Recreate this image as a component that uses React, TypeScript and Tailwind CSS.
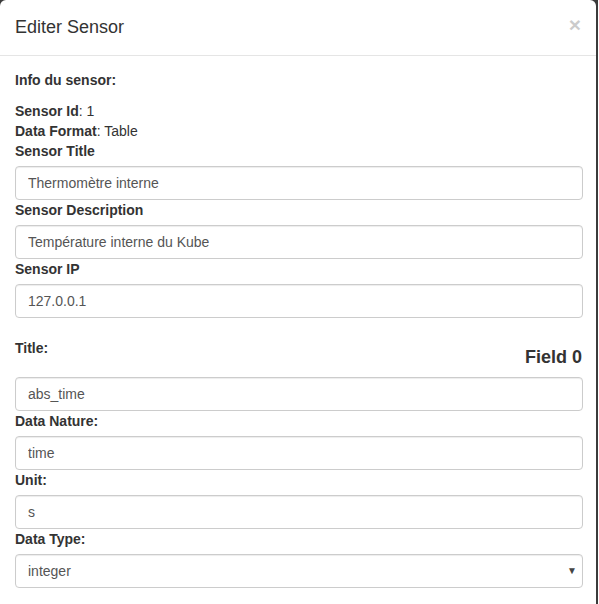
import React from "react";

const inputClass =
  "block h-[34px] w-full rounded-[4px] border border-[#ccc] bg-white px-3 py-[6px] text-[14px] leading-[20px] text-[#555] shadow-[inset_0_1px_1px_rgba(0,0,0,0.075)] outline-none";

const Field: React.FC<{ label: string; value: string }> = ({ label, value }) => (
  <div>
    <label className="mb-[5px] block font-bold leading-[20px]">{label}</label>
    <input className={inputClass} defaultValue={value} />
  </div>
);

const App: React.FC = () => {
  return (
    <div className="min-h-screen w-[599px] bg-white">
      <div className="flex min-h-screen w-[598px] bg-[#3b3b3b]">
        <div className="w-[596px] rounded-t-[6px] bg-white font-['Liberation_Sans',Arial,sans-serif] text-[14px] leading-[20px] text-[#333]">
          {/* header */}
          <div className="flex h-[56px] items-center justify-between border-b border-[#e5e5e5] pb-[2px] pl-[15px] pr-[15px]">
            <h4 className="text-[18px] leading-[20px] font-normal">Editer Sensor</h4>
            <button className="mb-[5px] text-[21px] leading-none font-bold text-black opacity-20">
              ×
            </button>
          </div>

          {/* body */}
          <div className="pl-[15px] pr-[13px] pt-[14px]">
            <p className="mb-[11px] font-bold">Info du sensor:</p>
            <div>
              <b>Sensor Id</b>: 1
            </div>
            <div>
              <b>Data Format</b>: Table
            </div>
            <Field label="Sensor Title" value="Thermomètre interne" />
            <Field label="Sensor Description" value="Température interne du Kube" />
            <Field label="Sensor IP" value="127.0.0.1" />

            <div className="mt-[20px] flex items-start justify-between">
              <label className="block font-bold leading-[20px]">Title:</label>
              <h4 className="mt-[9px] mr-px text-[18px] leading-[20px] font-bold">Field 0</h4>
            </div>
            <input className={`${inputClass} mt-[10px]`} defaultValue="abs_time" />
            <Field label="Data Nature:" value="time" />
            <Field label="Unit:" value="s" />
            <div>
              <label className="mb-[5px] block font-bold leading-[20px]">Data Type:</label>
              <div className="relative">
                <select className={`${inputClass} appearance-none`} defaultValue="integer">
                  <option value="integer">integer</option>
                  <option value="float">float</option>
                  <option value="string">string</option>
                </select>
                <span className="pointer-events-none absolute top-[9px] right-[6px] text-[10px] leading-[16px] text-[#444]">
                  ▼
                </span>
              </div>
            </div>
          </div>
        </div>
      </div>
    </div>
  );
};

export default App;
